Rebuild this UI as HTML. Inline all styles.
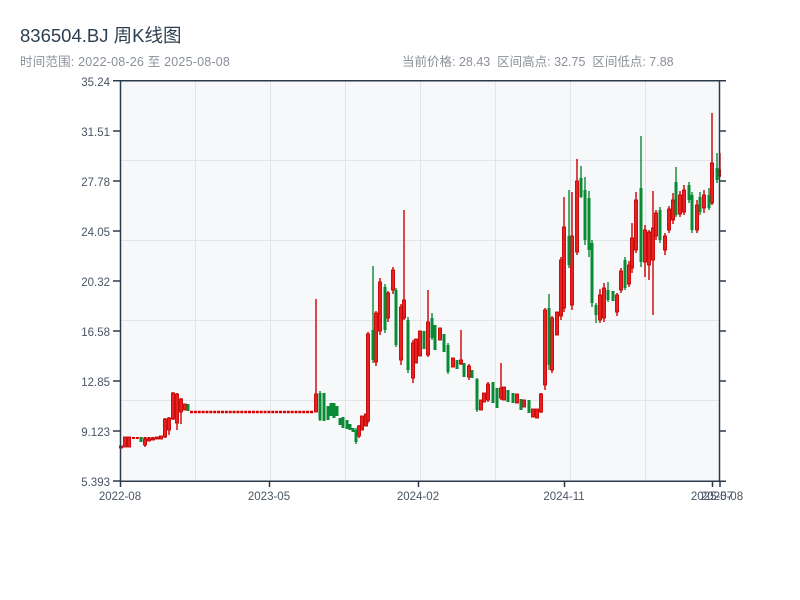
<!DOCTYPE html>
<html><head><meta charset="utf-8"><style>
body{margin:0;background:#fff;width:800px;height:600px;overflow:hidden;font-family:"Liberation Sans","Noto Sans CJK SC",sans-serif}
.t{position:absolute;left:20px;top:22px;font-size:18.5px;color:#2c3e50}
.s{position:absolute;top:51px;font-size:12.5px;color:#8a9099}
svg{position:absolute;left:0;top:0}
.r{fill:#e8201f;stroke:#c40000;stroke-width:.9}
.g{fill:#0b8a36}
</style></head><body>
<div class="t">836504.BJ 周K线图</div>
<div class="s" style="left:20px;letter-spacing:0.2px">时间范围: 2022-08-26 至 2025-08-08</div>
<div class="s" style="left:402px">当前价格: 28.43&nbsp; 区间高点: 32.75&nbsp; 区间低点: 7.88</div>
<svg width="800" height="600" xmlns="http://www.w3.org/2000/svg">
<rect x="120" y="81" width="600" height="400" fill="#f6f8fa"/>
<g stroke="#e1e4e9" stroke-width="1">
<line x1="120" x2="720" y1="160.5" y2="160.5"/><line x1="120" x2="720" y1="240.5" y2="240.5"/><line x1="120" x2="720" y1="320.5" y2="320.5"/><line x1="120" x2="720" y1="400.5" y2="400.5"/>
<line y1="81" y2="481" x1="195.5" x2="195.5"/><line y1="81" y2="481" x1="270.5" x2="270.5"/><line y1="81" y2="481" x1="345.5" x2="345.5"/><line y1="81" y2="481" x1="420.5" x2="420.5"/><line y1="81" y2="481" x1="495.5" x2="495.5"/><line y1="81" y2="481" x1="570.5" x2="570.5"/><line y1="81" y2="481" x1="645.5" x2="645.5"/>
</g>
<line x1="190" y1="412" x2="314" y2="412" stroke="#d40000" stroke-width="2.5" stroke-dasharray="3 0.87"/>
<line x1="132" y1="438" x2="160" y2="438" stroke="#d40000" stroke-width="2" stroke-dasharray="3 0.87"/>
<path stroke="#cc0000" stroke-width="1.4" fill="none" d="M145 438V447M165 418V438M169 417V435M173 392V420M177 393V430M181 398V424M316 299V412M359 425V438M368 332V423M376 311V366M380 278V335M388 291V322M393 267V294M401 304V365M404 210V320M413 340V383M428 290V357M461 330V365M469 364V380M488 382V402M501 363V400M541 393V413M545 308V390M552 316V373M561 257V320M564 197V312M572 192V310M577 159V255M600 289V323M604 283V322M617 293V316M621 268V293M629 261V287M632 223V273M636 192V253M645 225V277M649 230V280M653 191V315M656 210V240M665 233V255M669 206V233M673 193V224M680 191V217M684 185V215M697 200V233M704 190V213M712 113V205M720 153V177"/>
<path stroke="#0b8a36" stroke-width="1.4" fill="none" d="M320 391V421M356 428V444M373 266V363M385 284V333M396 288V347M408 317V373M432 313V340M448 343V374M477 378V412M549 294V370M569 190V268M581 166V198M585 177V245M589 191V257M592 240V307M596 303V323M608 282V302M625 257V290M641 136V267M660 207V243M676 167V217M689 182V203M692 192V233M700 192V215M709 188V210M717 153V183"/>
<g class="r">
<rect x="119.5" y="446" width="3" height="2"/><rect x="123.5" y="437" width="3" height="10"/><rect x="127.5" y="437" width="3" height="10"/>
<rect x="143.5" y="439" width="3" height="6"/><rect x="147.5" y="439" width="3" height="2"/><rect x="151.5" y="438" width="3" height="2"/><rect x="155.5" y="437" width="3" height="2"/><rect x="159.5" y="436" width="3" height="3"/>
<rect x="163.5" y="419" width="3" height="18"/><rect x="167.5" y="418" width="3" height="12"/><rect x="171.5" y="393" width="3" height="26"/><rect x="175.5" y="394" width="3" height="29"/><rect x="179.5" y="399" width="3" height="13"/><rect x="183.5" y="404" width="3" height="6"/>
<rect x="314.5" y="394" width="3" height="18"/><rect x="357.5" y="426" width="3" height="10"/><rect x="360.5" y="416" width="3" height="14"/><rect x="364.5" y="414" width="3" height="12"/>
<rect x="366.5" y="334" width="3" height="87"/><rect x="374.5" y="313" width="3" height="49"/><rect x="378.5" y="282" width="3" height="49"/><rect x="386.5" y="293" width="3" height="25"/><rect x="391.5" y="270" width="3" height="20"/>
<rect x="399.5" y="307" width="3" height="53"/><rect x="402.5" y="300" width="3" height="18"/><rect x="411.5" y="343" width="3" height="35"/><rect x="414.5" y="339" width="3" height="24"/><rect x="418.5" y="331" width="3" height="25"/><rect x="426.5" y="322" width="3" height="33"/>
<rect x="438.5" y="328" width="3" height="12"/><rect x="451.5" y="358" width="3" height="9"/><rect x="459.5" y="360" width="3" height="4"/><rect x="467.5" y="366" width="3" height="11"/>
<rect x="479.5" y="400" width="3" height="10"/><rect x="482.5" y="393" width="3" height="9"/><rect x="486.5" y="384" width="3" height="16"/><rect x="499.5" y="388" width="3" height="10"/><rect x="502.5" y="387" width="3" height="13"/>
<rect x="515.5" y="394" width="3" height="9"/><rect x="522.5" y="400" width="3" height="7"/><rect x="531.5" y="409" width="3" height="8"/><rect x="535.5" y="409" width="3" height="9"/><rect x="539.5" y="394" width="3" height="18"/>
<rect x="543.5" y="310" width="3" height="75"/><rect x="550.5" y="318" width="3" height="52"/><rect x="555.5" y="312" width="3" height="23"/><rect x="559.5" y="260" width="3" height="56"/><rect x="562.5" y="227" width="3" height="81"/><rect x="570.5" y="236" width="3" height="69"/><rect x="575.5" y="181" width="3" height="71"/>
<rect x="598.5" y="295" width="3" height="25"/><rect x="602.5" y="288" width="3" height="30"/><rect x="615.5" y="295" width="3" height="17"/><rect x="619.5" y="271" width="3" height="19"/><rect x="627.5" y="265" width="3" height="19"/><rect x="630.5" y="238" width="3" height="30"/><rect x="634.5" y="200" width="3" height="50"/>
<rect x="643.5" y="230" width="3" height="32"/><rect x="647.5" y="232" width="3" height="33"/><rect x="651.5" y="228" width="3" height="32"/><rect x="654.5" y="213" width="3" height="23"/><rect x="663.5" y="236" width="3" height="14"/><rect x="667.5" y="209" width="3" height="21"/><rect x="671.5" y="200" width="3" height="20"/>
<rect x="678.5" y="195" width="3" height="19"/><rect x="682.5" y="190" width="3" height="22"/><rect x="695.5" y="205" width="3" height="25"/><rect x="702.5" y="195" width="3" height="13"/><rect x="710.5" y="163" width="3" height="40"/><rect x="718.5" y="170" width="2" height="6"/>
</g>
<g class="g">
<rect x="139.5" y="437" width="3" height="5"/><rect x="186.5" y="404" width="3" height="7"/>
<rect x="318.5" y="393" width="3" height="27"/><rect x="322.5" y="393" width="3" height="28"/><rect x="326.5" y="406" width="3" height="14"/><rect x="329.5" y="403" width="3" height="13"/><rect x="332.5" y="403" width="3" height="15"/><rect x="335.5" y="406" width="3" height="10"/>
<rect x="338.5" y="418" width="3" height="7"/><rect x="341.5" y="417" width="3" height="11"/><rect x="345.5" y="420" width="3" height="9"/><rect x="348.5" y="424" width="3" height="6"/><rect x="351.5" y="428" width="3" height="4"/><rect x="354.5" y="430" width="3" height="12"/>
<rect x="371.5" y="330" width="3" height="30"/><rect x="383.5" y="287" width="3" height="43"/><rect x="394.5" y="290" width="3" height="55"/><rect x="406.5" y="320" width="3" height="50"/>
<rect x="422.5" y="331" width="3" height="18"/><rect x="430.5" y="318" width="3" height="20"/><rect x="433.5" y="325" width="3" height="25"/><rect x="442.5" y="334" width="3" height="18"/><rect x="446.5" y="345" width="3" height="27"/>
<rect x="455.5" y="360" width="3" height="9"/><rect x="462.5" y="363" width="3" height="14"/><rect x="470.5" y="370" width="3" height="8"/><rect x="475.5" y="379" width="3" height="31"/>
<rect x="491.5" y="382" width="3" height="21"/><rect x="495.5" y="388" width="3" height="20"/><rect x="506.5" y="390" width="3" height="12"/><rect x="511.5" y="393" width="3" height="10"/><rect x="519.5" y="399" width="3" height="11"/><rect x="527.5" y="400" width="3" height="13"/>
<rect x="547.5" y="308" width="3" height="57"/><rect x="567.5" y="236" width="3" height="29"/><rect x="579.5" y="178" width="3" height="19"/><rect x="583.5" y="190" width="3" height="50"/><rect x="587.5" y="198" width="3" height="52"/><rect x="590.5" y="243" width="3" height="60"/><rect x="594.5" y="305" width="3" height="10"/>
<rect x="606.5" y="290" width="3" height="10"/><rect x="611.5" y="291" width="3" height="10"/><rect x="623.5" y="260" width="3" height="28"/><rect x="639.5" y="188" width="3" height="74"/><rect x="658.5" y="210" width="3" height="30"/><rect x="674.5" y="182" width="3" height="33"/>
<rect x="687.5" y="185" width="3" height="15"/><rect x="690.5" y="195" width="3" height="35"/><rect x="698.5" y="197" width="3" height="15"/><rect x="707.5" y="195" width="3" height="13"/><rect x="715.5" y="168" width="3" height="12"/>
</g>
<g stroke="#2b3a4a" stroke-width="1.5" fill="none">
<line x1="120.5" y1="80" x2="120.5" y2="482"/><line x1="719.5" y1="80" x2="719.5" y2="482"/>
<line x1="113" y1="80.75" x2="726" y2="80.75"/><line x1="120" y1="481.25" x2="726" y2="481.25"/>
<path d="M113 131H120M113 181H120M113 231H120M113 281H120M113 331H120M113 381H120M113 431H120M113 481H120"/>
<path d="M720 131H726M720 181H726M720 231H726M720 281H726M720 331H726M720 381H726M720 431H726"/>
<path d="M120.5 481V487M269.5 481V487M418.5 481V487M564.5 481V487M712.5 481V487M720 481V487"/>
</g>
<g font-size="11.5" fill="#4a5564" text-anchor="end" font-family="Liberation Sans,sans-serif">
<text x="110" y="86">35.24</text><text x="110" y="136">31.51</text><text x="110" y="186">27.78</text><text x="110" y="236">24.05</text><text x="110" y="286">20.32</text><text x="110" y="336">16.58</text><text x="110" y="386">12.85</text><text x="110" y="436">9.123</text><text x="110" y="486">5.393</text>
</g>
<g font-size="11.5" fill="#4a5564" text-anchor="middle" font-family="Liberation Sans,sans-serif">
<text x="120" y="500">2022-08</text><text x="269" y="500">2023-05</text><text x="418" y="500">2024-02</text><text x="564" y="500">2024-11</text><text x="712" y="500">2025-07</text><text x="722" y="500">2025-08</text>
</g>
</svg>
</body></html>
